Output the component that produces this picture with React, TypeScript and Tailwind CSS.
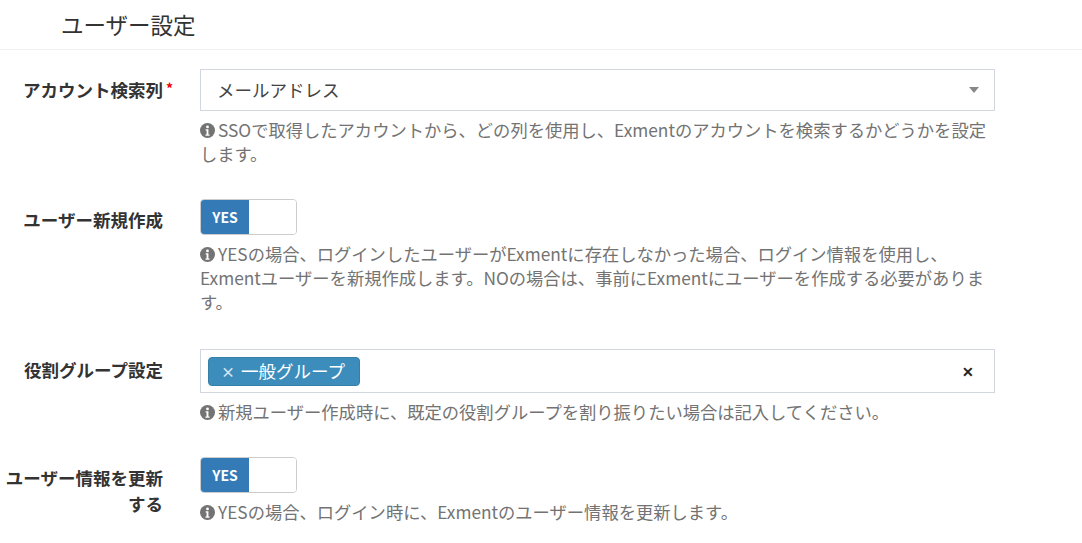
import type { ReactNode } from 'react';

const FONT = { fontFamily: '"Noto Sans CJK JP", "Noto Sans", sans-serif' };

function InfoIcon() {
  return (
    <svg viewBox="0 0 16 16" className="inline-block w-[15px] h-[15px] mr-[3px] -mt-[3px] align-middle">
      <circle cx="8" cy="8" r="8" fill="#737373" />
      <circle cx="8" cy="4.2" r="1.5" fill="#fff" />
      <path d="M6 6.6h3v5.6h1.2v1.4H5.8v-1.4H7V8H6z" fill="#fff" />
    </svg>
  );
}

function Help({ children }: { children: ReactNode }) {
  return (
    <p className="mt-[7px] whitespace-nowrap text-[17.3px] leading-[24px] text-[#737373]">{children}</p>
  );
}

function Row({
  label,
  required,
  className,
  children,
}: {
  label: ReactNode;
  required?: boolean;
  className?: string;
  children: ReactNode;
}) {
  return (
    <div className={`flex ${className ?? ''}`}>
      <div className="w-[185px] shrink-0 pr-[22px] pt-[8px] text-right text-[17.5px] leading-[26px] font-bold text-[#333]">
        <span className="relative">
          {label}
          {required && <span className="absolute -right-[10px] -top-[2px] text-[#e00] text-[14px]">*</span>}
        </span>
      </div>
      <div className="w-[825px] shrink-0 px-[15px]">{children}</div>
    </div>
  );
}

function Toggle() {
  return (
    <div className="flex h-[36px] w-[97px] overflow-hidden rounded-[4px] border border-[#ccc]">
      <div className="flex w-[48px] items-center justify-center bg-[#337ab7] text-[14px] font-bold text-white">
        YES
      </div>
      <div className="flex-1 bg-white" />
    </div>
  );
}

export default function App() {
  return (
    <div className="min-h-[543px] w-[1082px] bg-white" style={FONT}>
      <div className="h-[50px] border-b border-[#f0f0f0] pl-[61px] pt-[8px] text-[22.5px] leading-[32px] text-[#333]">
        ユーザー設定
      </div>

      <Row label="アカウント検索列" required className="mt-[19px]">
        <div className="flex h-[42px] items-center justify-between border border-[#d2d6de] pl-[16px] pr-[15px] text-[17.5px] text-[#444]">
          <span>メールアドレス</span>
          <span className="h-0 w-0 border-x-[5px] border-t-[6px] border-x-transparent border-t-[#888]" />
        </div>
        <Help>
          <InfoIcon />
          SSOで取得したアカウントから、どの列を使用し、Exmentのアカウントを検索するかどうかを設定
          <br />
          します。
        </Help>
      </Row>

      <Row label="ユーザー新規作成" className="mt-[33px]">
        <Toggle />
        <Help>
          <InfoIcon />
          YESの場合、ログインしたユーザーがExmentに存在しなかった場合、ログイン情報を使用し、
          <br />
          Exmentユーザーを新規作成します。NOの場合は、事前にExmentにユーザーを作成する必要がありま
          <br />
          す。
        </Help>
      </Row>

      <Row label="役割グループ設定" className="mt-[35px]">
        <div className="flex h-[44px] items-center justify-between border border-[#d2d6de] pl-[7px] pr-[20px]">
          <span className="flex h-[29px] items-center gap-[6px] rounded-[4px] border border-[#367fa9] bg-[#3c8dbc] pl-[12px] pr-[14px] text-[17.5px] text-white">
            <span className="text-[14px] font-bold text-[#d8e6f0]">×</span>
            一般グループ
          </span>
          <span className="text-[14px] font-bold text-[#222]">✕</span>
        </div>
        <Help>
          <InfoIcon />
          新規ユーザー作成時に、既定の役割グループを割り振りたい場合は記入してください。
        </Help>
      </Row>

      <Row
        label={
          <>
            ユーザー情報を更新
            <br />
            する
          </>
        }
        className="mt-[33px]"
      >
        <Toggle />
        <Help>
          <InfoIcon />
          YESの場合、ログイン時に、Exmentのユーザー情報を更新します。
        </Help>
      </Row>
    </div>
  );
}
